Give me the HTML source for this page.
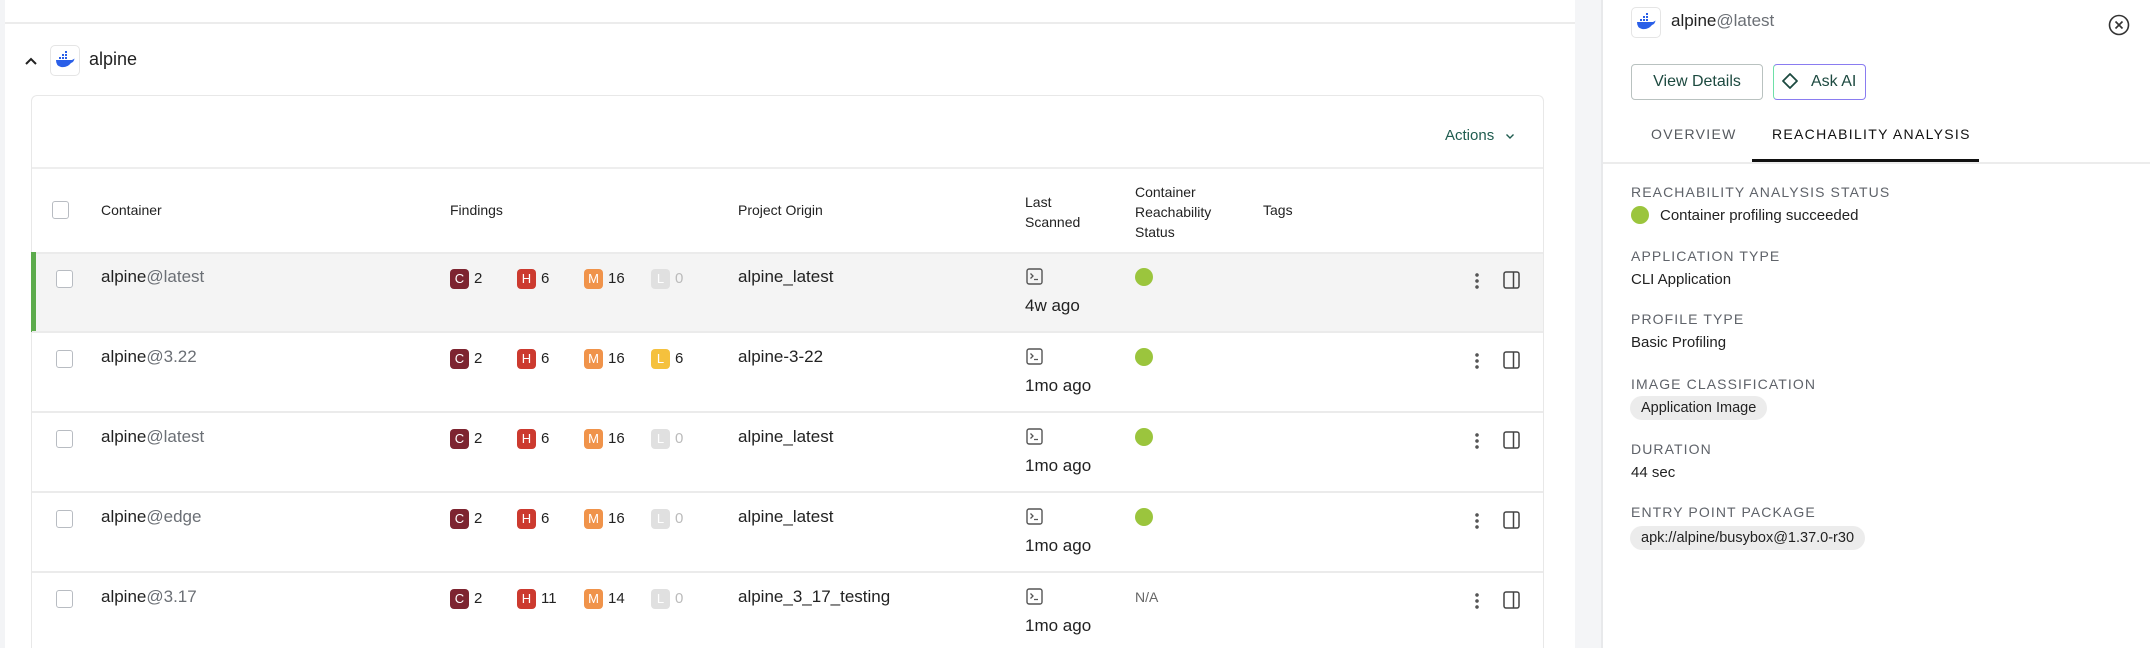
<!DOCTYPE html>
<html style="width:2150px;height:648px;overflow:hidden"><head><meta charset="utf-8"><style>
*{box-sizing:border-box;margin:0;padding:0}
body{width:2150px;height:648px;overflow:hidden;background:#fff;font-family:"Liberation Sans",Arial,sans-serif;color:#1f2328;position:relative}
.a{position:absolute;white-space:nowrap}
.hd{font-size:14px;color:#222}
.t{font-size:17px;color:#222}
.g{color:#6b6f75}
.b{position:absolute;width:19px;height:20px;border-radius:4px;color:#fff;font-size:13px;text-align:center;line-height:20px}
.n{position:absolute;font-size:15px;color:#222}
.cb{position:absolute;width:17px;height:18px;border:1.5px solid #b8bcc2;border-radius:3px;background:#fff}
.dot{position:absolute;width:18px;height:18px;border-radius:50%;background:#9bc53d}
.lbl{position:absolute;font-size:14px;letter-spacing:1.1px;color:#5f636a}
.val{position:absolute;font-size:15px;color:#222}
.pill{position:absolute;background:#ececec;border-radius:12px;font-size:14.5px;color:#222;padding:0 11px;height:24px;line-height:24px}
</style></head><body>
<div class="a" style="left:0;top:0;width:5px;height:648px;background:#f3f4f6"></div>
<div class="a" style="left:5px;top:22px;width:1570px;height:2px;background:#ececec"></div>
<div class="a" style="left:1575px;top:0;width:27px;height:648px;background:#f4f5f7"></div>
<div class="a" style="left:1601px;top:0;width:2px;height:648px;background:#e8e9eb"></div>
<svg class="a" style="left:24px;top:56px" width="14" height="10" viewBox="0 0 14 10"><path d="M2 8 L7 3 L12 8" fill="none" stroke="#222" stroke-width="2"/></svg>
<div class="a" style="left:50px;top:45px;width:30px;height:31px;border:1px solid #e5e5e5;border-radius:5px;background:#fff"></div>
<svg class="a" style="left:55px;top:51px" width="20" height="18" viewBox="0 0 20 18"><path d="M1 9 H17 Q19 8 19.5 7.5 Q19 11 16 12 Q12 17 6 16 Q1 15 1 9Z" fill="#2a5fe8"/><rect x="4" y="6" width="2" height="2" fill="#2a5fe8"/><rect x="7" y="6" width="2" height="2" fill="#2a5fe8"/><rect x="10" y="6" width="2" height="2" fill="#2a5fe8"/><rect x="7" y="3" width="2" height="2" fill="#2a5fe8"/><rect x="10" y="3" width="2" height="2" fill="#2a5fe8"/><rect x="10" y="0" width="2" height="2" fill="#2a5fe8"/></svg>
<div class="a t" style="left:89px;top:49px;font-size:18px">alpine</div>
<div class="a" style="left:31px;top:95px;width:1513px;height:553px;border:1px solid #e8e8e8;border-bottom:none;border-radius:6px 6px 0 0"></div>
<div class="a" style="left:1445px;top:127px;font-size:15px;color:#1f5c4f">Actions</div>
<svg class="a" style="left:1505px;top:133px" width="10" height="7" viewBox="0 0 10 7"><path d="M1.5 1.5 L5 5 L8.5 1.5" fill="none" stroke="#1f5c4f" stroke-width="1.4"/></svg>
<div class="a" style="left:32px;top:167px;width:1511px;height:2px;background:#eeeeee"></div>
<div class="cb" style="left:52px;top:201px"></div>
<div class="a hd" style="left:101px;top:202px">Container</div>
<div class="a hd" style="left:450px;top:202px">Findings</div>
<div class="a hd" style="left:738px;top:202px">Project Origin</div>
<div class="a hd" style="left:1025px;top:192px;line-height:20px">Last<br>Scanned</div>
<div class="a hd" style="left:1135px;top:182px;line-height:20px">Container<br>Reachability<br>Status</div>
<div class="a hd" style="left:1263px;top:202px">Tags</div>
<div class="a" style="left:32px;top:252px;width:1511px;height:80px;background:#f4f4f4;border-top:2px solid #ebebeb"></div>
<div class="a" style="left:31px;top:252px;width:5px;height:80px;background:#5cab4c"></div>
<div class="a" style="left:32px;top:331px;width:1511px;height:2px;background:#ebebeb"></div>
<div class="a" style="left:32px;top:411px;width:1511px;height:2px;background:#ebebeb"></div>
<div class="a" style="left:32px;top:491px;width:1511px;height:2px;background:#ebebeb"></div>
<div class="a" style="left:32px;top:571px;width:1511px;height:2px;background:#ebebeb"></div>
<div id="rows"></div>
<script>
var R=[["alpine","@latest","2","6","16","0",0,"alpine_latest","4w ago",1],
["alpine","@3.22","2","6","16","6",1,"alpine-3-22","1mo ago",1],
["alpine","@latest","2","6","16","0",0,"alpine_latest","1mo ago",1],
["alpine","@edge","2","6","16","0",0,"alpine_latest","1mo ago",1],
["alpine","@3.17","2","11","14","0",0,"alpine_3_17_testing","1mo ago",0]];
var h="",tops=[252,332,412,492,572];
R.forEach(function(r,i){var y=tops[i];
h+='<div class="cb" style="left:56px;top:'+(y+18)+'px"></div>';
h+='<div class="a t" style="left:101px;top:'+(y+15)+'px">'+r[0]+'<span class="g">'+r[1]+'</span></div>';
var bs=[["C","#7d2430",450,r[2]],["H","#cc3a2f",517,r[3]],["M","#f0934a",584,r[4]],["L",r[6]?"#f5c13d":"#e0e0e0",651,r[5]]];
bs.forEach(function(b,j){h+='<div class="b" style="left:'+b[2]+'px;top:'+(y+17)+'px;background:'+b[1]+'">'+b[0]+'</div>';
h+='<div class="n" style="left:'+(b[2]+24)+'px;top:'+(y+18)+'px;'+(j==3&&!r[6]?'color:#bbb':'')+'">'+b[3]+'</div>';});
h+='<div class="a t" style="left:738px;top:'+(y+15)+'px">'+r[7]+'</div>';
h+='<svg class="a" style="left:1026px;top:'+(y+16)+'px" width="17" height="17" viewBox="0 0 17 17"><rect x="1" y="1" width="15" height="15" rx="2" fill="none" stroke="#555" stroke-width="1.4"/><path d="M4.5 5.5 L7 8 L4.5 10.5 M8 11.5 H12" fill="none" stroke="#555" stroke-width="1.3"/></svg>';
h+='<div class="a t" style="left:1025px;top:'+(y+44)+'px">'+r[8]+'</div>';
if(r[9])h+='<div class="dot" style="left:1135px;top:'+(y+16)+'px"></div>';
else h+='<div class="a" style="left:1135px;top:'+(y+17)+'px;font-size:14px;color:#666">N/A</div>';
h+='<div class="a" style="left:1475px;top:'+(y+20)+'px;width:4px;height:18px;background:radial-gradient(circle,#555 1.6px,transparent 2px) 0 0/4px 6px repeat-y"></div>';
h+='<svg class="a" style="left:1503px;top:'+(y+19)+'px" width="17" height="18" viewBox="0 0 17 18"><rect x="1" y="1" width="15" height="16" rx="2" fill="none" stroke="#444" stroke-width="1.5"/><path d="M10.5 1 V17" stroke="#444" stroke-width="1.5"/></svg>';
});
document.getElementById("rows").outerHTML=h;
</script>
<div class="a" style="left:1631px;top:7px;width:30px;height:31px;border:1px solid #e5e5e5;border-radius:5px;background:#fff"></div>
<svg class="a" style="left:1636px;top:13px" width="20" height="18" viewBox="0 0 20 18"><path d="M1 9 H17 Q19 8 19.5 7.5 Q19 11 16 12 Q12 17 6 16 Q1 15 1 9Z" fill="#2a5fe8"/><rect x="4" y="6" width="2" height="2" fill="#2a5fe8"/><rect x="7" y="6" width="2" height="2" fill="#2a5fe8"/><rect x="10" y="6" width="2" height="2" fill="#2a5fe8"/><rect x="7" y="3" width="2" height="2" fill="#2a5fe8"/><rect x="10" y="3" width="2" height="2" fill="#2a5fe8"/><rect x="10" y="0" width="2" height="2" fill="#2a5fe8"/></svg>
<div class="a t" style="left:1671px;top:11px">alpine<span class="g">@latest</span></div>
<svg class="a" style="left:2108px;top:14px" width="22" height="22" viewBox="0 0 22 22"><circle cx="11" cy="11" r="9.5" fill="none" stroke="#333" stroke-width="1.6"/><path d="M7.5 7.5 L14.5 14.5 M14.5 7.5 L7.5 14.5" stroke="#333" stroke-width="1.6"/></svg>
<div class="a" style="left:1631px;top:64px;width:132px;height:36px;border:1px solid #b9c2c0;border-radius:4px;font-size:16px;color:#1d4a40;text-align:center;line-height:34px">View Details</div>
<div class="a" style="left:1773px;top:64px;width:93px;height:36px;border:1.5px solid #8a7cf0;border-left-color:#6ee0a8;border-radius:4px;font-size:16px;color:#1d4a40;line-height:33px;padding-left:37px">Ask AI</div>
<svg class="a" style="left:1781px;top:72px" width="18" height="18" viewBox="0 0 18 18"><path d="M9 2 L16 9 L9 16 L2 9Z" fill="none" stroke="#1d4a40" stroke-width="1.8" stroke-linejoin="round"/></svg>
<div class="a" style="left:1651px;top:126px;font-size:14px;letter-spacing:1.3px;color:#55595e">OVERVIEW</div>
<div class="a" style="left:1772px;top:126px;font-size:14px;letter-spacing:1.3px;color:#111">REACHABILITY ANALYSIS</div>
<div class="a" style="left:1603px;top:162px;width:547px;height:2px;background:#ececec"></div>
<div class="a" style="left:1752px;top:159px;width:227px;height:3px;background:#111"></div>
<div class="lbl" style="left:1631px;top:184px">REACHABILITY ANALYSIS STATUS</div>
<div class="dot" style="left:1631px;top:206px"></div>
<div class="val" style="left:1660px;top:207px">Container profiling succeeded</div>
<div class="lbl" style="left:1631px;top:248px">APPLICATION TYPE</div>
<div class="val" style="left:1631px;top:271px">CLI Application</div>
<div class="lbl" style="left:1631px;top:311px">PROFILE TYPE</div>
<div class="val" style="left:1631px;top:334px">Basic Profiling</div>
<div class="lbl" style="left:1631px;top:376px">IMAGE CLASSIFICATION</div>
<div class="pill" style="left:1630px;top:396px">Application Image</div>
<div class="lbl" style="left:1631px;top:441px">DURATION</div>
<div class="val" style="left:1631px;top:464px">44 sec</div>
<div class="lbl" style="left:1631px;top:504px">ENTRY POINT PACKAGE</div>
<div class="pill" style="left:1630px;top:526px">apk://alpine/busybox@1.37.0-r30</div>
</body></html>
